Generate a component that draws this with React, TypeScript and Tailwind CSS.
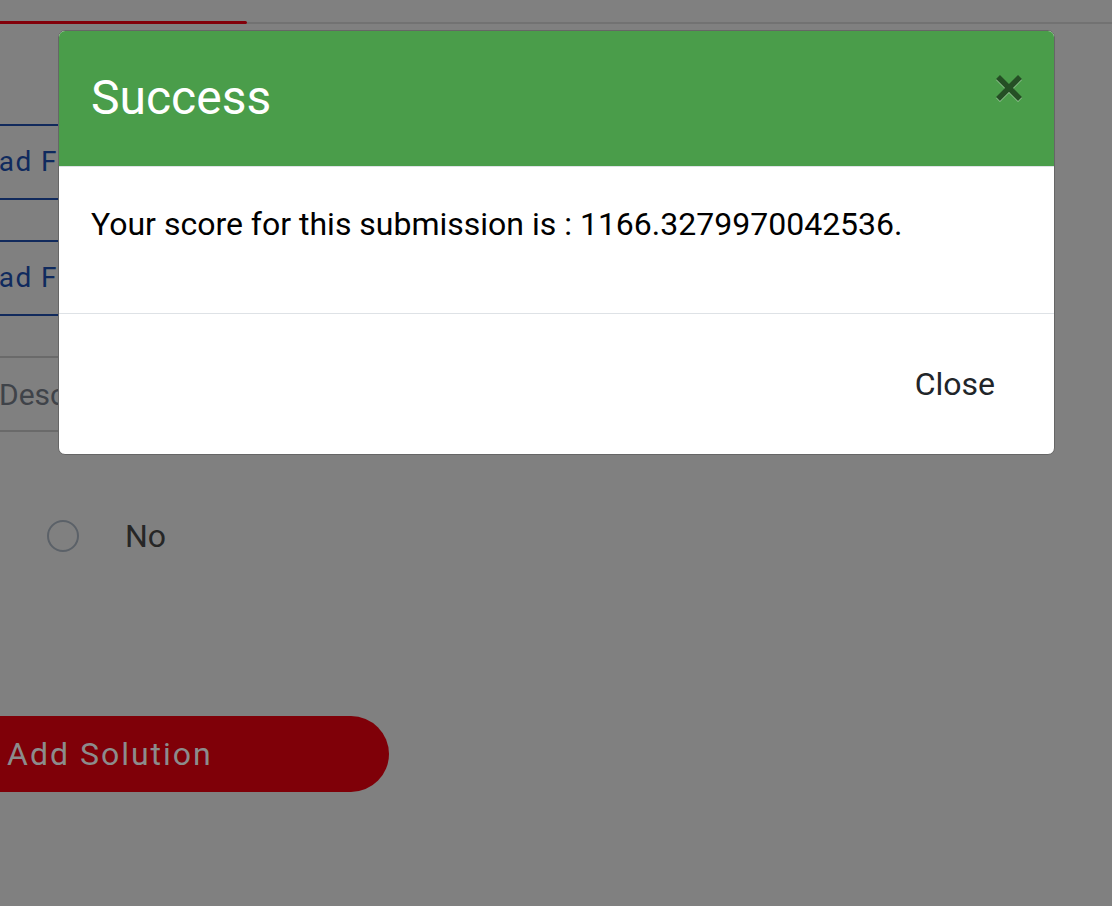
import React from "react";

const roboto = { fontFamily: "Roboto, 'Noto Sans', Arial, sans-serif" };

function CloseIcon() {
  return (
    <svg width="28" height="28" viewBox="0 0 28 28" aria-hidden="true">
      <g stroke="#ffffff" strokeOpacity="0.45" strokeWidth="5.5" strokeLinecap="butt" transform="translate(0,1)">
        <line x1="3" y1="3" x2="25" y2="25" />
        <line x1="25" y1="3" x2="3" y2="25" />
      </g>
      <g stroke="#254f25" strokeWidth="5.5" strokeLinecap="butt">
        <line x1="3" y1="3" x2="25" y2="25" />
        <line x1="25" y1="3" x2="3" y2="25" />
      </g>
    </svg>
  );
}

export default function App() {
  return (
    <div className="relative h-[906px] w-[1112px] overflow-hidden bg-[#808080]" style={roboto}>
      {/* Underlying page, dimmed by the modal backdrop */}
      <div className="flex flex-col">
        <div className="mt-[21px] flex items-center">
          <div className="h-[3px] w-[247px] rounded-r-full bg-[#82000a]" />
          <div className="h-[2px] flex-1 bg-[#727272]" />
        </div>

        <div className="ml-[-64px] mt-[100px] flex h-[76px] w-[520px] items-center border-y-2 border-[#112a5c] text-[28px] tracking-[1.5px] text-[#0f2a5e]">
          Upload File
        </div>
        <div className="ml-[-64px] mt-[40px] flex h-[76px] w-[520px] items-center border-y-2 border-[#112a5c] text-[28px] tracking-[1.5px] text-[#0f2a5e]">
          Upload File
        </div>

        <div className="ml-[-1px] mt-[40px] flex h-[76px] w-[520px] items-center border-y-2 border-[#6a6a6a] text-[30px] text-[#3f4349]">
          Description
        </div>

        <div className="mt-[80px] flex items-center">
          <div className="ml-[47px] h-[32px] w-[32px] rounded-full border-2 border-[#5b6168]" />
          <span className="ml-[46px] text-[32px] text-[#262626]">No</span>
        </div>

        <div className="ml-[-60px] mt-[156px] flex h-[76px] w-[449px] items-center rounded-full bg-[#7f0008] pl-[67px] text-[32px] tracking-[2px] text-[#8c8c8c]">
          Add Solution
        </div>
      </div>

      {/* Modal */}
      <div className="absolute left-[58px] top-[30px] flex w-[997px] flex-col overflow-hidden rounded-[7px] border border-[#666666] bg-white">
        <div className="flex h-[136px] items-start justify-between border-b border-[#dee2e6] bg-[#4a9d4a] pl-[32px] pr-[32px]">
          <h5 className="mt-[38px] text-[48px] leading-[1.2] text-white">Success</h5>
          <div className="mr-[-1px] mt-[43px]">
            <CloseIcon />
          </div>
        </div>
        <div className="h-[146px] px-[32px] pt-[33px]">
          <p className="text-[32px] leading-[1.5] text-black">
            Your score for this submission is : 1166.3279970042536.
          </p>
        </div>
        <div className="flex h-[141px] items-center justify-end border-t border-[#dee2e6] pr-[59px]">
          <button className="text-[32px] text-[#212529]">Close</button>
        </div>
      </div>
    </div>
  );
}
